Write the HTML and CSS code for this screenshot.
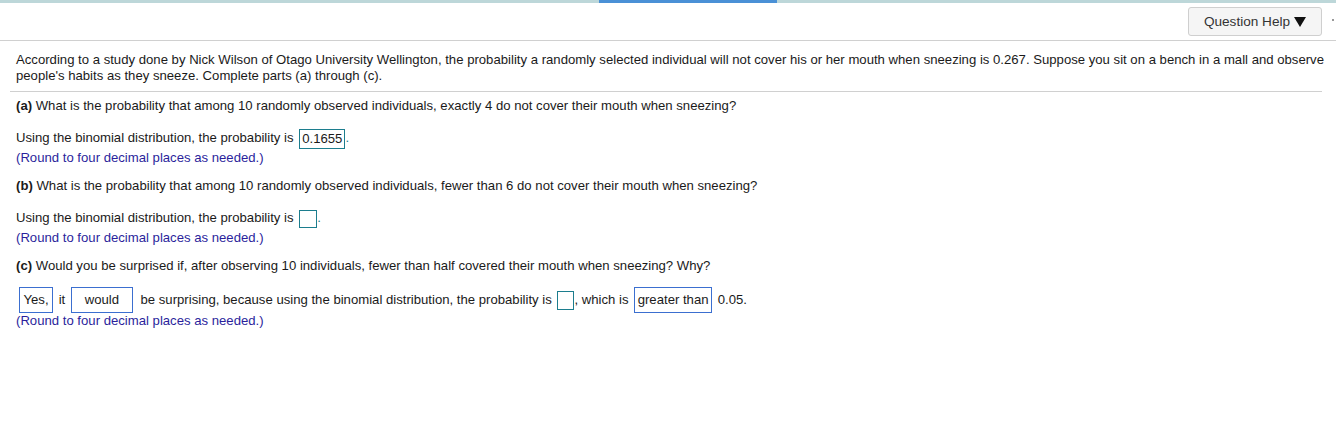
FILE: index.html
```
<!DOCTYPE html>
<html>
<head>
<meta charset="utf-8">
<link rel="stylesheet" href="styles.css">
</head>
<body>
<div class="topbar"><div class="topbar-active"></div></div>
<div class="header">
  <button class="help-btn">Question Help <span class="caret"></span></button>
  <span class="dot"></span>
</div>
<div class="question">
  <p class="intro">According to a study done by Nick Wilson of Otago University Wellington, the probability a randomly selected individual will not cover his or her mouth when sneezing is 0.267. Suppose you sit on a bench in a mall and observe people's habits as they sneeze. Complete parts (a) through (c).</p>
  <div class="rule"></div>
  <p class="part"><b>(a)</b> What is the probability that among 10 randomly observed individuals, exactly 4 do not cover their mouth when sneezing?</p>
  <p class="answer">Using the binomial distribution, the probability is <span class="box filled">0.1655</span><span class="teal">.</span></p>
  <p class="note">(Round to four decimal places as needed.)</p>
  <p class="part"><b>(b)</b> What is the probability that among 10 randomly observed individuals, fewer than 6 do not cover their mouth when sneezing?</p>
  <p class="answer">Using the binomial distribution, the probability is <span class="box empty"></span><span class="teal">.</span></p>
  <p class="note">(Round to four decimal places as needed.)</p>
  <p class="part"><b>(c)</b> Would you be surprised if, after observing 10 individuals, fewer than half covered their mouth when sneezing? Why?</p>
  <p class="answer-c"><span class="sel sel-yes">Yes,</span> it <span class="sel sel-would">would</span> be surprising, because using the binomial distribution, the probability is <span class="box empty-c"></span>, which is <span class="sel sel-gt">greater than</span> 0.05.</p>
  <p class="note">(Round to four decimal places as needed.)</p>
</div>
</body>
</html>
```
FILE: styles.css
```
html, body {
  margin: 0;
  padding: 0;
  background: #fff;
}
body {
  font-family: "Liberation Sans", Arial, sans-serif;
  font-size: 13.15px;
  color: #1a1a1a;
}
p { margin: 0; }

.topbar {
  height: 3px;
  background: #bdd7d9;
  display: flex;
}
.topbar-active {
  margin-left: 599px;
  width: 178px;
  height: 3px;
  background: #4a90d6;
}

.header {
  height: 37px;
  border-bottom: 1px solid #d0d0d0;
  display: flex;
  justify-content: flex-end;
  align-items: flex-start;
  padding-right: 2px;
}
.help-btn {
  margin-top: 4px;
  width: 134px;
  height: 29px;
  background: #f5f5f5;
  border: 1px solid #cfcfcf;
  border-radius: 3px;
  font-family: "Liberation Sans", Arial, sans-serif;
  font-size: 13.6px;
  color: #333;
  padding: 0;
  display: flex;
  align-items: center;
  justify-content: center;
  gap: 4px;
}
.caret {
  width: 0;
  height: 0;
  border-left: 6.5px solid transparent;
  border-right: 6.5px solid transparent;
  border-top: 10px solid #111;
  margin-top: 1px;
}
.dot {
  width: 2px;
  height: 2px;
  background: #777;
  border-radius: 1px;
  margin-top: 16px;
  margin-left: 10px;
}

.question {
  padding-left: 16px;
  padding-right: 8px;
}
.intro {
  padding-top: 11px;
  line-height: 16px;
}
.rule {
  margin-top: 7px;
  margin-left: -6px;
  margin-right: 6px;
  height: 1px;
  background: #d0d0d0;
}
.part {
  margin-top: 12px;
  line-height: 16px;
}
.rule + .part { margin-top: 6px; }
.answer {
  margin-top: 15px;
  line-height: 18px;
}
.note {
  margin-top: 3px;
  line-height: 16px;
  color: #2b1f9c;
}
.answer-c + .note { margin-top: 0; }

.box {
  display: inline-block;
  vertical-align: middle;
  box-sizing: border-box;
  border: 1px solid #1c7d8e;
  margin-left: 2px;
}
.filled {
  height: 20px;
  line-height: 18px;
  padding: 0 2px;
  margin-top: -2px;
  margin-bottom: -2px;
}
.empty {
  width: 18px;
  height: 18px;
  margin-top: -2px;
  margin-bottom: -2px;
}
.empty-c {
  width: 17px;
  height: 19px;
}
.teal { color: #1c7d8e; }

.answer-c {
  margin-top: 13px;
  line-height: 26px;
  height: 26px;
}
.sel {
  display: inline-block;
  vertical-align: top;
  box-sizing: border-box;
  height: 26px;
  line-height: 24px;
  border: 1px solid #3b6fd0;
  text-align: center;
}
.sel-yes { margin-left: 3px; margin-right: 2px; width: 34px; }
.sel-would { margin-left: 2px; margin-right: 4px; width: 62px; }
.sel-gt { margin-left: 2px; margin-right: 2px; width: 78px; }
```
